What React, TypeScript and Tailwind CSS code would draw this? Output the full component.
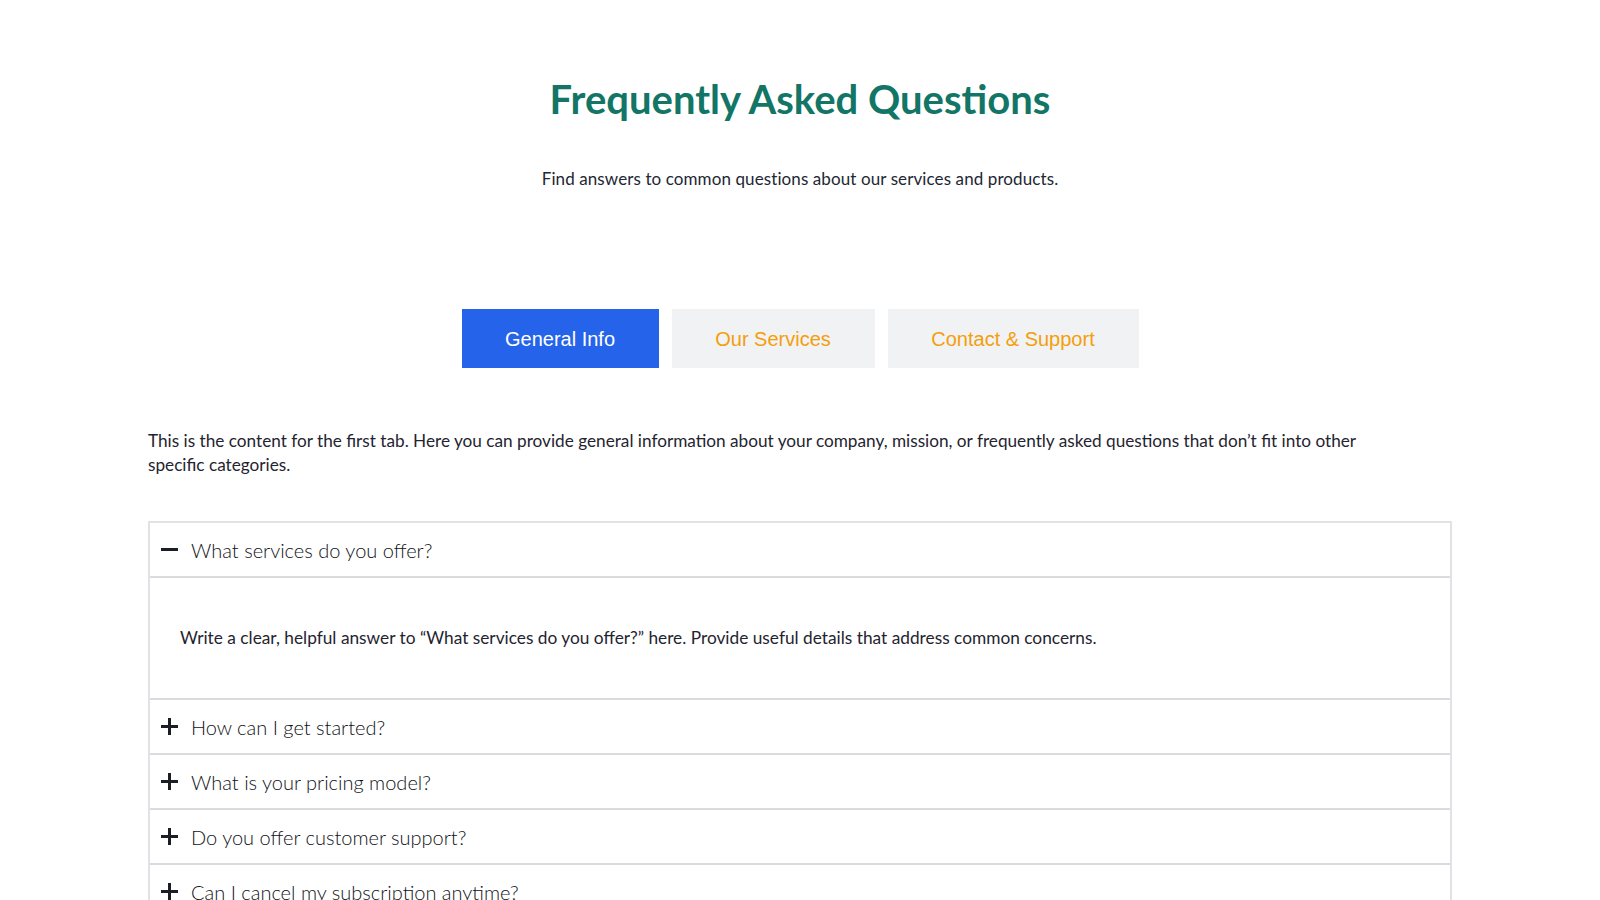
import { useState } from "react";

const tabs = ["General Info", "Our Services", "Contact & Support"];

const faqs = [
  "What services do you offer?",
  "How can I get started?",
  "What is your pricing model?",
  "Do you offer customer support?",
  "Can I cancel my subscription anytime?",
];

const body = { fontFamily: "Lato, 'Noto Sans', sans-serif" };

function Icon({ open }: { open: boolean }) {
  return (
    <svg width="17" height="17" viewBox="0 0 17 17" className="shrink-0">
      <rect x="0" y="7" width="17" height="3" fill="#1b1e25" />
      {!open && <rect x="7" y="0" width="3" height="17" fill="#1b1e25" />}
    </svg>
  );
}

export default function App() {
  const [tab, setTab] = useState(0);
  const [open, setOpen] = useState(0);

  return (
    <div className="min-h-screen bg-white text-[#1f2430]" style={body}>
      <div className="mx-auto w-[1304px]">
        <h1 className="pt-[75px] text-center text-[40px] font-bold leading-[48px] text-[#127566]">
          Frequently Asked Questions
        </h1>
        <p className="mt-[44px] text-center text-[17px] leading-6 tracking-[0.1px] text-[#222733]">
          Find answers to common questions about our services and products.
        </p>

        {/* Tabs */}
        <div
          className="mt-[118px] flex justify-center gap-[13px]"
          style={{ fontFamily: "'Liberation Sans', Arial, sans-serif" }}
        >
          {tabs.map((t, i) => (
            <button
              key={t}
              onClick={() => setTab(i)}
              className={`h-[59px] text-[20px] ${
                i === 0 ? "w-[197px]" : i === 1 ? "w-[203px]" : "w-[251px]"
              } ${i === tab ? "bg-[#2563eb] text-white" : "bg-[#f1f2f4] text-[#f59e0b]"}`}
            >
              {t}
            </button>
          ))}
        </div>

        <p className="mt-[61px] max-w-[1245px] text-[17.2px] leading-6 text-[#1f2430]">
          This is the content for the first tab. Here you can provide general information about your company, mission, or
          frequently asked questions that don’t fit into other specific categories.
        </p>

        {/* Accordion */}
        <div className="mt-[44px] border-2 border-b-0 border-[#e1e2e5]">
          {faqs.map((q, i) => (
            <div key={q} className="border-b-2 border-[#d9dbdf]">
              <button
                onClick={() => setOpen(open === i ? -1 : i)}
                className="flex h-[53px] w-full items-center gap-[13px] px-[11px] text-left"
              >
                <Icon open={open === i} />
                <span className="text-[20px] font-light text-[#0f1218]">{q}</span>
              </button>
              {open === i && (
                <div className="flex h-[122px] items-center border-t-2 border-[#d9dbdf] px-[30px] text-[17.3px] text-[#1f2430]">
                  Write a clear, helpful answer to “{q}” here. Provide useful details that address common concerns.
                </div>
              )}
            </div>
          ))}
        </div>
      </div>
    </div>
  );
}
